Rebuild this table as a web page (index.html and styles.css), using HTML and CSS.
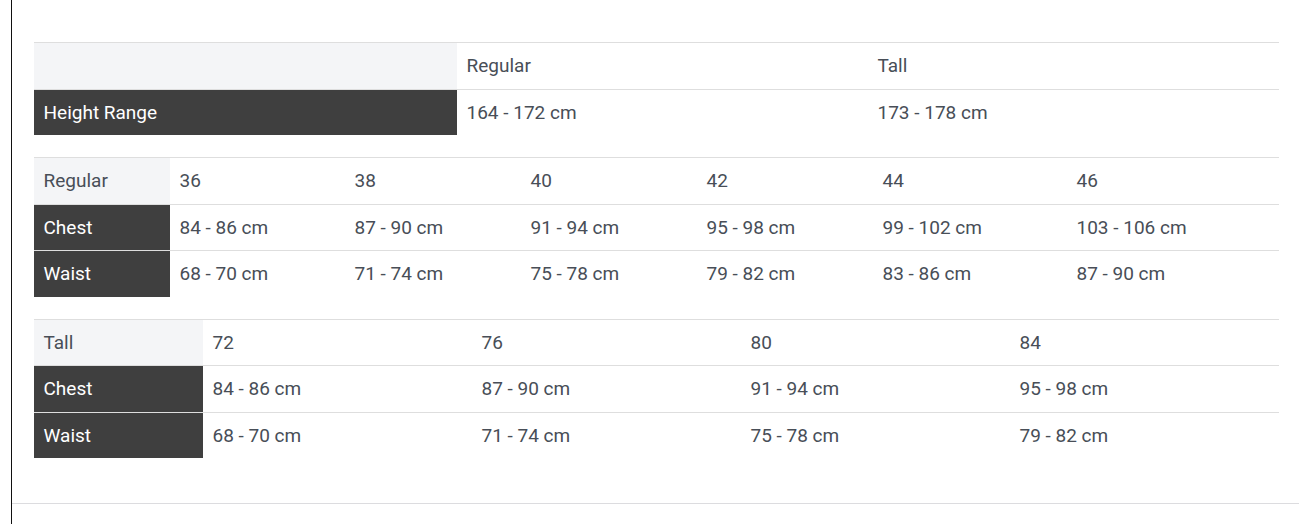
FILE: index.html
```html
<!DOCTYPE html>
<html>
<head>
<meta charset="utf-8">
<link rel="stylesheet" href="styles.css">
</head>
<body>
<div class="page">
  <div class="content">
    <table class="size-table">
      <colgroup><col class="c423"><col class="c411"><col class="c411"></colgroup>
      <tr class="head"><td class="label-light"></td><td>Regular</td><td>Tall</td></tr>
      <tr><th>Height Range</th><td>164 - 172 cm</td><td>173 - 178 cm</td></tr>
    </table>
    <table class="size-table">
      <colgroup><col class="c136"><col class="c175"><col class="c176"><col class="c176"><col class="c176"><col class="c194"><col class="c212"></colgroup>
      <tr class="head"><td class="label-light">Regular</td><td>36</td><td>38</td><td>40</td><td>42</td><td>44</td><td>46</td></tr>
      <tr><th>Chest</th><td>84 - 86 cm</td><td>87 - 90 cm</td><td>91 - 94 cm</td><td>95 - 98 cm</td><td>99 - 102 cm</td><td>103 - 106 cm</td></tr>
      <tr><th>Waist</th><td>68 - 70 cm</td><td>71 - 74 cm</td><td>75 - 78 cm</td><td>79 - 82 cm</td><td>83 - 86 cm</td><td>87 - 90 cm</td></tr>
    </table>
    <table class="size-table last">
      <colgroup><col class="c169"><col class="c269"><col class="c269"><col class="c269"><col class="c269"></colgroup>
      <tr class="head"><td class="label-light">Tall</td><td>72</td><td>76</td><td>80</td><td>84</td></tr>
      <tr><th>Chest</th><td>84 - 86 cm</td><td>87 - 90 cm</td><td>91 - 94 cm</td><td>95 - 98 cm</td></tr>
      <tr><th>Waist</th><td>68 - 70 cm</td><td>71 - 74 cm</td><td>75 - 78 cm</td><td>79 - 82 cm</td></tr>
    </table>
  </div>
  <div class="rule"></div>
</div>
</body>
</html>
```
FILE: styles.css
```css
html, body {
  margin: 0;
  padding: 0;
  background: #ffffff;
}
body {
  font-family: Roboto, "Liberation Sans", Arial, sans-serif;
  font-size: 19px;
  color: #484e57;
}
.page {
  margin-left: 11px;
  border-left: 1px solid #111111;
  min-height: 524px;
  box-sizing: border-box;
}
.content {
  padding: 42px 20px 0 22px;
}
.size-table {
  width: 1245px;
  table-layout: fixed;
  border-collapse: collapse;
  margin-bottom: 22px;
}
.size-table.last {
  margin-bottom: 45px;
}
.size-table td,
.size-table th {
  border-top: 1px solid #dedede;
  padding: 9px 10px 9px 9.5px;
  line-height: 27.5px;
  text-align: left;
  font-weight: 400;
  white-space: nowrap;
}
.size-table .head td {
  background: #ffffff;
}
.size-table .head td.label-light {
  background: #f4f5f7;
}
.size-table th {
  background: #3f3f3f;
  color: #ffffff;
}
.c423 { width: 423px; }
.c411 { width: 411px; }
.c136 { width: 136px; }
.c175 { width: 175px; }
.c176 { width: 176px; }
.c194 { width: 194px; }
.c212 { width: 212px; }
.c169 { width: 169px; }
.c269 { width: 269px; }
.rule {
  border-top: 1px solid #dcdcdf;
  height: 20px;
}
```
